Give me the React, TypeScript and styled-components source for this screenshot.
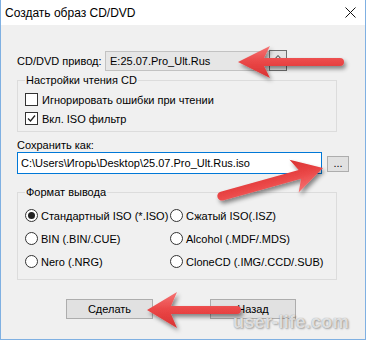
import React from 'react';
import styled, { createGlobalStyle } from 'styled-components';

const GlobalStyle = createGlobalStyle`
  html, body {
    margin: 0;
    padding: 0;
    background: #ffffff;
  }
  body {
    font-family: "Liberation Sans", Arial, sans-serif;
    font-size: 11px;
    color: #000;
  }
`;

const Stage = styled.div`
  position: relative;
  width: 366px;
  height: 342px;
`;

const Window = styled.div`
  box-sizing: border-box;
  width: 366px;
  height: 340px;
  background: #f0f0f0;
  border: 1px solid #7fb0e2;
  border-top: none;
  display: flex;
  flex-direction: column;
  overflow: hidden;
`;

const TitleBar = styled.div`
  flex: none;
  height: 25px;
  background: #fff;
  display: flex;
  align-items: center;
  justify-content: space-between;
  padding: 0 9px 0 4px;
`;

const Title = styled.span`
  font-size: 12px;
`;

const Content = styled.div`
  display: flex;
  flex-direction: column;
  align-items: flex-start;
  padding-left: 16px;
`;

const DriveRow = styled.div`
  display: flex;
  align-items: center;
  height: 20px;
  margin-top: 26px;
`;

const Label = styled.span<{ $width?: number }>`
  ${p => (p.$width ? `width: ${p.$width}px;` : '')}
  line-height: 13px;
`;

const DriveField = styled.div`
  box-sizing: border-box;
  width: 182px;
  height: 20px;
  display: flex;
  align-items: center;
  padding-left: 4px;
  background: #e6e6e6;
  border: 1px solid #c2c2c2;
`;

const DriveText = styled.span`
  flex: 1;
  white-space: nowrap;
`;

const SpinButton = styled.div`
  flex: none;
  box-sizing: border-box;
  width: 18px;
  height: 21px;
  margin: -2px -1px 0 0;
  border: 1px solid #6e6e6e;
  background: #e4e4e4;
  display: flex;
  align-items: center;
  justify-content: center;
  svg {
    display: block;
  }
`;

const GroupBox = styled.fieldset<{ $top: number }>`
  box-sizing: border-box;
  width: 320px;
  min-inline-size: 0;
  margin: ${p => p.$top}px 0 0;
  padding: 0 7px;
  border: 1px solid #dcdcdc;
`;

const Legend = styled.legend`
  padding: 0 1px;
  line-height: 13px;
`;

const CheckList = styled.div`
  padding: 3px 0;
`;

const CheckRow = styled.div`
  display: flex;
  align-items: center;
  gap: 4px;
  height: 19px;
`;

const CheckBox = styled.span`
  box-sizing: border-box;
  width: 13px;
  height: 13px;
  border: 1px solid #333;
  background: #fff;
  display: flex;
  align-items: center;
  justify-content: center;
`;

const SaveLabel = styled(Label)`
  margin-top: 7px;
`;

const PathRow = styled.div`
  display: flex;
  align-items: center;
  gap: 5px;
  height: 22px;
`;

const PathInput = styled.input`
  box-sizing: border-box;
  width: 305px;
  height: 22px;
  margin: 0;
  padding: 0 0 0 3px;
  border: 1px solid #0078d7;
  outline: none;
  background: #fff;
  font: inherit;
  color: #000;
`;

const BrowseButton = styled.div`
  box-sizing: border-box;
  width: 22px;
  height: 16px;
  margin-top: 2px;
  border: 1px solid #adadad;
  background: #e1e1e1;
  display: flex;
  align-items: flex-end;
  justify-content: center;
  line-height: 12px;
  padding-bottom: 2px;
`;

const RadioGrid = styled.div`
  display: grid;
  grid-template-columns: 145px auto;
  grid-auto-rows: 23px;
  padding: 5px 0 6px;
`;

const RadioRow = styled.div`
  display: flex;
  align-items: center;
  gap: 3px;
`;

const RadioCircle = styled.span<{ $checked?: boolean }>`
  box-sizing: border-box;
  width: 13px;
  height: 13px;
  border-radius: 50%;
  border: 1px solid #333;
  background: #fff;
  display: flex;
  align-items: center;
  justify-content: center;
  &::after {
    content: '';
    width: 7px;
    height: 7px;
    border-radius: 50%;
    background: ${p => (p.$checked ? '#222' : 'transparent')};
  }
`;

const ButtonRow = styled.div`
  display: flex;
  gap: 57px;
  margin-top: 19px;
  padding-left: 49px;
`;

const DialogButton = styled.div<{ $width: number }>`
  box-sizing: border-box;
  width: ${p => p.$width}px;
  height: 20px;
  border: 1px solid #adadad;
  background: #e1e1e1;
  display: flex;
  align-items: center;
  justify-content: center;
  line-height: 11px;
`;

const Overlay = styled.svg`
  position: absolute;
  left: 0;
  top: 0;
  pointer-events: none;
`;

const Watermark = styled.div`
  position: absolute;
  left: 233px;
  top: 315px;
  font-family: "Liberation Sans", Arial, sans-serif;
  font-weight: bold;
  font-size: 18px;
  line-height: 14px;
  letter-spacing: 0.3px;
  color: rgba(255, 255, 255, 0.72);
  text-shadow: 0 0 1px rgba(90, 90, 90, 0.6), 1px 1px 2px rgba(0, 0, 0, 0.3);
  pointer-events: none;
`;

type ArrowProps = { x: number; y: number; angle: number; len: number; head: number; half: number; shaft: number };

const Arrow = ({ x, y, angle, len, head, half, shaft }: ArrowProps) => {
  const notch = head - 6;
  const d = `M0,0 L${head},${-half} L${notch},${-shaft} L${len},${-shaft} A${shaft},${shaft} 0 0 1 ${len},${shaft} L${notch},${shaft} L${head},${half} Z`;
  return (
    <g filter="url(#arrowShadow)">
      <path d={d} fill="url(#arrowFill)" transform={`translate(${x} ${y}) rotate(${angle})`} />
    </g>
  );
};

const CheckMark = () => (
  <svg width="9" height="9" viewBox="0 0 9 9">
    <path d="M1 4.5 L3.5 7 L8 1.5" fill="none" stroke="#222" strokeWidth="1.3" />
  </svg>
);

const formats = [
  { label: 'Стандартный ISO (*.ISO)', checked: true },
  { label: 'Сжатый ISO(.ISZ)' },
  { label: 'BIN (.BIN/.CUE)' },
  { label: 'Alcohol (.MDF/.MDS)' },
  { label: 'Nero (.NRG)' },
  { label: 'CloneCD (.IMG/.CCD/.SUB)' },
];

export default function App() {
  return (
    <Stage>
      <GlobalStyle />
      <Window>
        <TitleBar>
          <Title>Создать образ CD/DVD</Title>
          <svg width="11" height="11" viewBox="0 0 11 11">
            <path d="M0.5 0.5 L10.5 10.5 M10.5 0.5 L0.5 10.5" stroke="#111" strokeWidth="1" />
          </svg>
        </TitleBar>
        <Content>
          <DriveRow>
            <Label $width={88}>CD/DVD привод:</Label>
            <DriveField>
              <DriveText>E:25.07.Pro_Ult.Rus</DriveText>
              <SpinButton>
                <svg width="12" height="12" viewBox="0 0 12 12">
                  <path d="M6 1.5 L11 7 L1 7 Z" fill="none" stroke="#333" strokeWidth="1" />
                  <rect x="1" y="8.5" width="10" height="1.5" fill="#333" />
                </svg>
              </SpinButton>
            </DriveField>
          </DriveRow>

          <GroupBox $top={3}>
            <Legend>Настройки чтения CD</Legend>
            <CheckList>
              <CheckRow>
                <CheckBox />
                Игнорировать ошибки при чтении
              </CheckRow>
              <CheckRow>
                <CheckBox>
                  <CheckMark />
                </CheckBox>
                Вкл. ISO фильтр
              </CheckRow>
            </CheckList>
          </GroupBox>

          <SaveLabel>Сохранить как:</SaveLabel>
          <PathRow>
            <PathInput readOnly value="C:\Users\Игорь\Desktop\25.07.Pro_Ult.Rus.iso" />
            <BrowseButton>...</BrowseButton>
          </PathRow>

          <GroupBox $top={12}>
            <Legend>Формат вывода</Legend>
            <RadioGrid>
              {formats.map(f => (
                <RadioRow key={f.label}>
                  <RadioCircle $checked={f.checked} />
                  {f.label}
                </RadioRow>
              ))}
            </RadioGrid>
          </GroupBox>

          <ButtonRow>
            <DialogButton $width={87}>Сделать</DialogButton>
            <DialogButton $width={86}>Назад</DialogButton>
          </ButtonRow>
        </Content>
      </Window>

      <Overlay width="366" height="342">
        <defs>
          <linearGradient id="arrowFill" x1="0" y1="0" x2="0" y2="1">
            <stop offset="0" stopColor="#f57474" />
            <stop offset="0.5" stopColor="#ea4646" />
            <stop offset="1" stopColor="#d83232" />
          </linearGradient>
          <filter id="arrowShadow" x="-20%" y="-40%" width="140%" height="180%">
            <feDropShadow dx="2" dy="3" stdDeviation="2" floodColor="#000" floodOpacity="0.45" />
          </filter>
        </defs>
        <Arrow x={238} y={62} angle={0} len={102} head={32} half={16} shaft={4} />
        <Arrow x={323} y={168} angle={164.5} len={105} head={30} half={17} shaft={4.5} />
        <Arrow x={147} y={310} angle={0} len={90} head={30} half={18} shaft={4} />
      </Overlay>
      <Watermark>user-life.com</Watermark>
    </Stage>
  );
}
